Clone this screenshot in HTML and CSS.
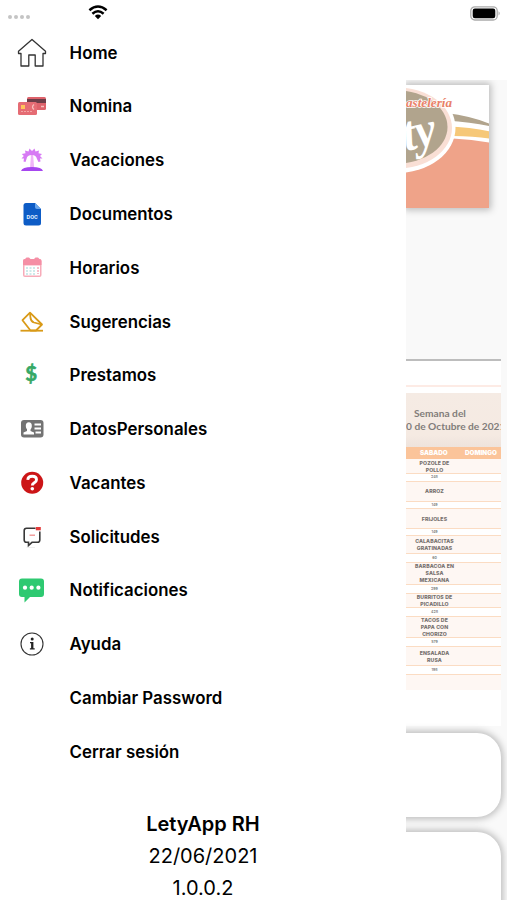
FILE: index.html
```html
<!DOCTYPE html>
<html lang="es">

<head>
    <meta charset="UTF-8">
    <meta name="viewport" content="width=device-width, initial-scale=1.0">
    <title>LetyApp RH</title>
    <link rel="stylesheet" href="styles.css">
</head>
<body>
    <header class="status">
        <div class="signal"><i></i><i></i><i></i><i></i></div>
        <svg class="wifi" width="20" height="15" viewBox="0 0 20 15">
            <g fill="none" stroke="#000" stroke-width="2.5">
                <path d="M1.4 5.2Q10-2.2 18.6 5.2"/>
                <path d="M4.4 8.7Q10 3.7 15.6 8.7"/>
            </g>
            <path d="M6.8 11Q10 8.2 13.2 11L10 14.3Z"/>
        </svg>
        <svg class="battery" width="31" height="15" viewBox="0 0 31 15">
            <rect x=".8" y=".8" width="26.4" height="13.2" rx="4" fill="#fff" stroke="#aaa" stroke-width="1.3"/>
            <rect x="2.7" y="2.5" width="22.6" height="9.8" rx="2.2"/>
            <path d="M28.6 5.3Q30.6 7.4 28.6 9.5Z" fill="#999"/>
        </svg>
    </header>

    <div class="app">
        <nav class="drawer">
            <ul class="menu">
                <li>
                    <svg width="30" height="30" viewBox="0 0 30 30" fill="none" stroke="#333" stroke-width="1.3" stroke-linejoin="round">
                        <path d="M15 1.5L1.5 13.2V15.5H4V28H11.8V17H18.2V28H26V15.5H28.5V13.2Z"/>
                    </svg>
                    <span>Home</span>
                </li>
                <li>
                    <svg width="30" height="30" viewBox="0 0 30 30">
                        <rect x="10" y="6" width="19" height="13" rx="1.5" fill="#de626b"/>
                        <path d="M10 8H29V12H10Z" fill="#6c3d48"/>
                        <rect x="1" y="11" width="19" height="13" rx="1.5" fill="#e56c74"/>
                        <rect x="4" y="14" width="4" height="4" fill="#ffc45a"/>
                        <path d="M4 20.5H16" stroke="#f4a5a5" stroke-dasharray="2 1"/>
                        <path d="M17 13.5Q14 16 17 18.5M24 15.5H27" stroke="#f8c0bd" fill="none" stroke-width="1.3"/>
                    </svg>
                    <span>Nomina</span>
                </li>
                <li>
                    <svg width="30" height="30" viewBox="0 0 30 30">
                        <path d="M14 9H16L17.3 24H13Z" fill="#f0b4f8"/>
                        <path d="M15 10Q10 10 9.5 14L8.5 17L6.5 16.5L7 13.5L4.5 13.5L6.8 11L4.8 9L8.5 8.2L8 5.5L11.5 6.5L12.5 3.5L15 6L17.5 3.5L18.5 6.5L22 5.5L21.5 8.2L25 9L23 11L25.5 13.5L23 13.5L23.5 16.5L21.5 17L20 14Q19 10 15 10Z" fill="#d77af4"/>
                        <path d="M4 26Q5 22 15 22Q25 22 26 26Z" fill="#a646ef"/>
                    </svg>
                    <span>Vacaciones</span>
                </li>
                <li>
                    <svg width="30" height="30" viewBox="0 0 30 30">
                        <path d="M9 4H18L24 10V24Q24 26.5 21.5 26.5H9Q6.5 26.5 6.5 24V6.5Q6.5 4 9 4Z" fill="#0d5cc6"/>
                        <path d="M18 4L24 10H20Q18 10 18 8Z" fill="#6ba7ec"/>
                        <text x="15.2" y="20" class="doc-text">DOC</text>
                    </svg>
                    <span>Documentos</span>
                </li>
                <li>
                    <svg width="30" height="30" viewBox="0 0 30 30">
                        <rect x="6" y="6" width="18.5" height="18" rx="2" fill="#f7abb9"/>
                        <path d="M6 12V8Q6 6 8 6L9.5 4.5H12L13.5 6H17L18.5 4.5H21L22.5 6Q24.5 6 24.5 8V12Z" fill="#f58fa5"/>
                        <rect x="7.5" y="12.5" width="15.5" height="10" fill="#fff"/>
                        <path d="M9 15H19M9 18H19M9 21H19" stroke="#bfe3e3" stroke-width="1.4" stroke-dasharray="2 1.5"/>
                        <path d="M21 14V21" stroke="#f6a9b9" stroke-width="1.5" stroke-dasharray="2 1"/>
                    </svg>
                    <span>Horarios</span>
                </li>
                <li>
                    <svg width="30" height="30" viewBox="0 0 30 30" fill="none" stroke="#d99a18" stroke-width="1.8" stroke-linejoin="round">
                        <path d="M13 5.7L25 17.5L19 23.5H13.5L5.5 13.2Z"/>
                        <path d="M13 6.5L13.5 11Q14 14.5 17 15.5L24.5 17.5"/>
                        <path d="M3.5 23.7H26"/>
                    </svg>
                    <span>Sugerencias</span>
                </li>
                <li>
                    <svg width="30" height="30" viewBox="0 0 30 30">
                        <text x="14.3" y="20.5" class="dollar">$</text>
                    </svg>
                    <span>Prestamos</span>
                </li>
                <li>
                    <svg width="30" height="30" viewBox="0 0 30 30">
                        <rect x="4" y="6" width="22.5" height="17.5" rx="3" fill="#737373"/>
                        <ellipse cx="11.8" cy="12" rx="3" ry="3.7" fill="#fff"/>
                        <path d="M6.5 20.5V18.5L10 17V14H13.5V17L17 18.5V20.5Z" fill="#fff"/>
                        <path d="M17.5 10.5H24M17.5 14.5H24M18.5 18.5H24" stroke="#fff" stroke-width="1.8"/>
                    </svg>
                    <span>DatosPersonales</span>
                </li>
                <li>
                    <svg width="30" height="30" viewBox="0 0 30 30">
                        <circle cx="15.2" cy="14.8" r="11" fill="#cc1517"/>
                        <path d="M10.8 11.8Q11 8.3 15.3 8.3Q19.5 8.3 19.5 11.8Q19.5 13.5 17.3 14.8Q15.3 16 15.3 17.5" fill="none" stroke="#fff" stroke-width="2.9"/>
                        <circle cx="15.3" cy="20.8" r="1.8" fill="#fff"/>
                    </svg>
                    <span>Vacantes</span>
                </li>
                <li>
                    <svg width="30" height="30" viewBox="0 0 30 30">
                        <path d="M18.5 6.3H9.5Q7.2 6.3 7.2 8.6V18Q7.2 20.3 9.5 20.3H11.5V23.5L15 20.3H20.5Q22.8 20.3 22.8 18V9.5" fill="none" stroke="#383838" stroke-width="1.6"/>
                        <rect x="18.8" y="5" width="5" height="3.3" fill="#e33b3b"/>
                        <path d="M12.5 13.2H18" stroke="#f08d8d" stroke-width="1.3"/>
                        <path d="M9.5 25.5H18" stroke="#eee"/>
                    </svg>
                    <span>Solicitudes</span>
                </li>
                <li>
                    <svg width="30" height="30" viewBox="0 0 30 30">
                        <path d="M5 3.5H24Q27 3.5 27 6.5V19Q27 22 24 22H13L7.5 27.5V22H5Q2 22 2 19V6.5Q2 3.5 5 3.5Z" fill="#2ec971"/>
                        <g fill="#fff"><circle cx="8" cy="12.7" r="2.1"/><circle cx="14.7" cy="12.7" r="2.1"/><circle cx="21.4" cy="12.7" r="2.1"/></g>
                    </svg>
                    <span>Notificaciones</span>
                </li>
                <li>
                    <svg width="30" height="30" viewBox="0 0 30 30">
                        <circle cx="15" cy="15" r="11" fill="none" stroke="#333" stroke-width="1.1"/>
                        <circle cx="15.2" cy="10" r="1.5" fill="#222"/>
                        <path d="M13 13H16.4V19.3H17.7V20.5H12.9V19.3H14.1V14.2H13Z" fill="#222"/>
                    </svg>
                    <span>Ayuda</span>
                </li>
                <li><span class="no-icon">Cambiar Password</span></li>
                <li><span class="no-icon">Cerrar sesión</span></li>
            </ul>
            <div class="version">
                <strong>LetyApp RH</strong>
                <div>22/06/2021</div>
                <div>1.0.0.2</div>
            </div>
        </nav>

        <main class="page">
            <svg class="banner" width="83" height="123" viewBox="0 0 83 123">
                <rect width="83" height="123" fill="#fff"/>
                <path d="M0 50L47 53.5Q66 54.5 83 57.5V123H0Z" fill="#efa389"/>
                <path d="M40 28Q65 31 83 38.5V41Q65 37 40 35.5Z" fill="#b1a48d"/>
                <path d="M40 41.5Q65 42 83 46.3V53.5Q65 50.5 40 51Z" fill="#f6c878"/>
                <ellipse cx="-9" cy="43" rx="58.5" ry="45" fill="#fff"/>
                <ellipse cx="-9" cy="43" rx="55" ry="40.5" fill="#f9dfd5"/>
                <ellipse cx="-9" cy="42" rx="50.5" ry="36.5" fill="#b1a48d"/>
                <text x="0" y="66" class="logo-text" transform="rotate(-12 0 66)" textLength="33" lengthAdjust="spacingAndGlyphs">ty</text>
                <text x="0" y="21.5" class="logo-top" textLength="46" lengthAdjust="spacingAndGlyphs">astelería</text>
            </svg>

            <section class="week">
                <div class="week-title">Semana del<span>0 de Octubre de 2021</span></div>
                <div class="days"><span>SABADO</span><span>DOMINGO</span></div>
                <div class="dish h15">POZOLE DE<br>POLLO</div>
                <div class="kcal">248</div>
                <div class="dish h20">ARROZ</div>
                <div class="kcal">149</div>
                <div class="dish h19">FRIJOLES</div>
                <div class="kcal">149</div>
                <div class="dish h18">CALABACITAS<br>GRATINADAS</div>
                <div class="kcal k9">60</div>
                <div class="dish h21">BARBACOA EN<br>SALSA<br>MEXICANA</div>
                <div class="kcal k9">299</div>
                <div class="dish h14">BURRITOS DE<br>PICADILLO</div>
                <div class="kcal k9">428</div>
                <div class="dish h21">TACOS DE<br>PAPA CON<br>CHORIZO</div>
                <div class="kcal k9">579</div>
                <div class="dish h19">ENSALADA<br>RUSA</div>
                <div class="kcal k9">198</div>
                <div class="dish last"></div>
            </section>

            <div class="card"></div>
            <div class="card"></div>
        </main>
    </div>
</body>

</html>
```
FILE: styles.css
```css
        * {
            box-sizing: border-box;
        }

        body {
            font-family: Inter, "Liberation Sans", sans-serif;
            background-color: #fff;
            margin: 0;
            color: #000;
            height: 900px;
            overflow: hidden;
        }

        .status {
            height: 25.8px;
            display: flex;
            align-items: flex-start;
            padding: 5px 6px 0 8px;
        }

        .signal {
            display: flex;
            gap: 2px;
            width: 80px;
            padding-top: 10px;
        }

        .signal i {
            width: 4px;
            height: 4px;
            border-radius: 50%;
            background-color: #c4c4c4;
        }

        .battery {
            margin: 1px 0 0 auto;
        }

        .app {
            display: grid;
            grid-template-columns: 406px 101px;
            height: 874.2px;
        }

        .drawer {
            background-color: #fff;
        }

        .menu {
            list-style-type: none;
            margin: 0;
            padding: 0;
        }

        .menu li {
            height: 53.77px;
            display: flex;
            align-items: center;
            padding-left: 16.6px;
            gap: 23px;
            font-size: 16.85px;
            font-weight: 600;
        }

        .menu .no-icon {
            margin-left: 53px;
        }

        .doc-text {
            font: 800 5px Inter, sans-serif;
            fill: #dceaff;
            text-anchor: middle;
        }

        .dollar {
            font: bold 20.5px Lato, sans-serif;
            fill: #36a866;
            stroke: #36a866;
            stroke-width: 0.6px;
            text-anchor: middle;
        }

        .version {
            margin-top: 29.4px;
            text-align: center;
            font-size: 20px;
            line-height: 32.2px;
        }

        .version strong {
            display: block;
            font-weight: 600;
        }

        .page {
            overflow: hidden;
            margin-top: 54.2px;
            padding-top: 5px;
            background-color: #f9f9f9;
        }

        .banner {
            display: block;
            box-shadow: 0 0 7px 2px rgba(0, 0, 0, 0.25);
        }

        .logo-text {
            font: italic bold 50px "Liberation Serif", serif;
            fill: #fff;
        }

        .logo-top {
            font: italic bold 12px "Liberation Serif", serif;
            fill: #e98168;
            stroke: #fff;
            stroke-width: 1.5px;
            paint-order: stroke;
        }

        .week {
            width: 95px;
            height: 367px;
            margin-top: 151px;
            border-top: 2px solid #bdbdbd;
            background-color: #fff;
            overflow: hidden;
        }

        .week-title {
            height: 62px;
            margin-top: 24px;
            border-top: 2px solid #fdebe5;
            padding: 20px 0 0 8px;
            background: linear-gradient(#fff 6px, #f5ebe4 6px, #f5eae2 48px, #eee3dc);
            color: #827d7a;
            font: bold 10.2px/13px Lato, sans-serif;
            white-space: nowrap;
        }

        .week-title span {
            display: block;
            margin-left: -8px;
        }

        .days {
            height: 12.5px;
            display: flex;
            background-color: #fbc49a;
            color: #fff;
            font: 900 6.3px/12px Inter, sans-serif;
        }

        .days span:first-child {
            width: 59px;
            padding-left: 14px;
        }

        .dish {
            display: flex;
            align-items: center;
            justify-content: center;
            padding: 1px 38px 0 0;
            border-bottom: 1px solid #fbdcc3;
            background-color: #fef7f3;
            color: #77716e;
            font: 800 5.2px/7px Inter, sans-serif;
            letter-spacing: 0.1px;
            text-align: center;
            white-space: nowrap;
        }

        .kcal {
            height: 7.5px;
            border-bottom: 1px solid #fbdcc3;
            padding-right: 38px;
            color: #777;
            font: 600 3.6px/7px Inter, sans-serif;
            text-align: center;
        }

        .k9 {
            height: 9px;
            line-height: 8px;
        }

        .h14 { height: 14.2px; }
        .h15 { height: 14.9px; }
        .h18 { height: 18px; }
        .h19 { height: 19.5px; }
        .h20 { height: 20px; }
        .h21 { height: 21.2px; }

        .last {
            height: 15px;
            border-bottom: none;
        }

        .card {
            width: 125px;
            height: 84px;
            margin: 7px 0 0 -30px;
            border-radius: 24px;
            background-color: #fff;
            box-shadow: 0 0 7px 2px rgba(0, 0, 0, 0.25);
        }

        .card + .card {
            height: 110px;
            margin-top: 15px;
        }
```
